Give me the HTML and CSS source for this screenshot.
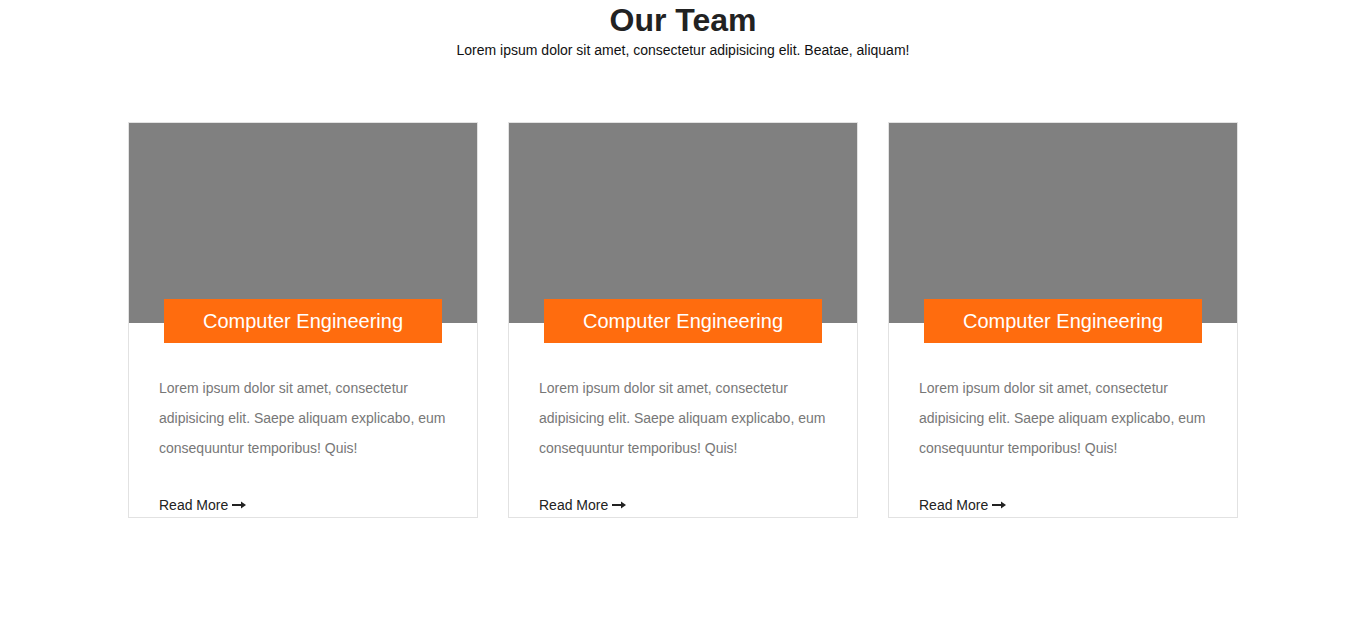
FILE: index.html
```html
<!DOCTYPE html>
<html>
<head>
<meta charset="utf-8">
<link rel="stylesheet" href="styles.css">
</head>
<body>
<section class="team">
  <header class="head">
    <h1 class="title">Our Team</h1>
    <p class="sub">Lorem ipsum dolor sit amet, consectetur adipisicing elit. Beatae, aliquam!</p>
  </header>
  <div class="cards">
    <div class="card">
      <div class="pic"></div>
      <div class="label">Computer Engineering</div>
      <div class="body">
        <p class="text">Lorem ipsum dolor sit amet, consectetur adipisicing elit. Saepe aliquam explicabo, eum consequuntur temporibus! Quis!</p>
        <a class="more" href="#">Read More <svg class="arrow" width="14" height="8" viewBox="0 0 14 8"><path d="M0 4H11" stroke="#222" stroke-width="2"/><path d="M9 0.5L14 4L9 7.5Z" fill="#222"/></svg></a>
      </div>
    </div>
    <div class="card">
      <div class="pic"></div>
      <div class="label">Computer Engineering</div>
      <div class="body">
        <p class="text">Lorem ipsum dolor sit amet, consectetur adipisicing elit. Saepe aliquam explicabo, eum consequuntur temporibus! Quis!</p>
        <a class="more" href="#">Read More <svg class="arrow" width="14" height="8" viewBox="0 0 14 8"><path d="M0 4H11" stroke="#222" stroke-width="2"/><path d="M9 0.5L14 4L9 7.5Z" fill="#222"/></svg></a>
      </div>
    </div>
    <div class="card">
      <div class="pic"></div>
      <div class="label">Computer Engineering</div>
      <div class="body">
        <p class="text">Lorem ipsum dolor sit amet, consectetur adipisicing elit. Saepe aliquam explicabo, eum consequuntur temporibus! Quis!</p>
        <a class="more" href="#">Read More <svg class="arrow" width="14" height="8" viewBox="0 0 14 8"><path d="M0 4H11" stroke="#222" stroke-width="2"/><path d="M9 0.5L14 4L9 7.5Z" fill="#222"/></svg></a>
      </div>
    </div>
  </div>
</section>
</body>
</html>
```

FILE: styles.css
```css
html, body {
  margin: 0;
  padding: 0;
  background: #fff;
}
body {
  font-family: "Liberation Sans", Arial, sans-serif;
  font-size: 14px;
  color: #222;
}
.team {
  padding-top: 2px;
}
.head {
  text-align: center;
}
.title {
  margin: 0;
  font-size: 32px;
  font-weight: bold;
  line-height: 36px;
  color: #222;
}
.sub {
  margin: 4px 0 0;
  font-size: 14px;
  line-height: 16px;
  color: #111;
}
.cards {
  display: flex;
  justify-content: center;
  gap: 30px;
  margin-top: 64px;
}
.card {
  width: 348px;
  border: 1px solid #e2e2e2;
  background: #fff;
}
.pic {
  height: 200px;
  background: #808080;
}
.label {
  margin: -24px 35px 0;
  height: 44px;
  line-height: 44px;
  background: #ff6c0e;
  color: #fff;
  font-size: 20px;
  text-align: center;
  position: relative;
}
.body {
  padding: 30px 30px 2px;
}
.text {
  margin: 0 0 32px;
  line-height: 30px;
  color: #777;
}
.more {
  display: block;
  line-height: 20px;
  color: #222;
  text-decoration: none;
}
.arrow {
  vertical-align: 1px;
}
```
